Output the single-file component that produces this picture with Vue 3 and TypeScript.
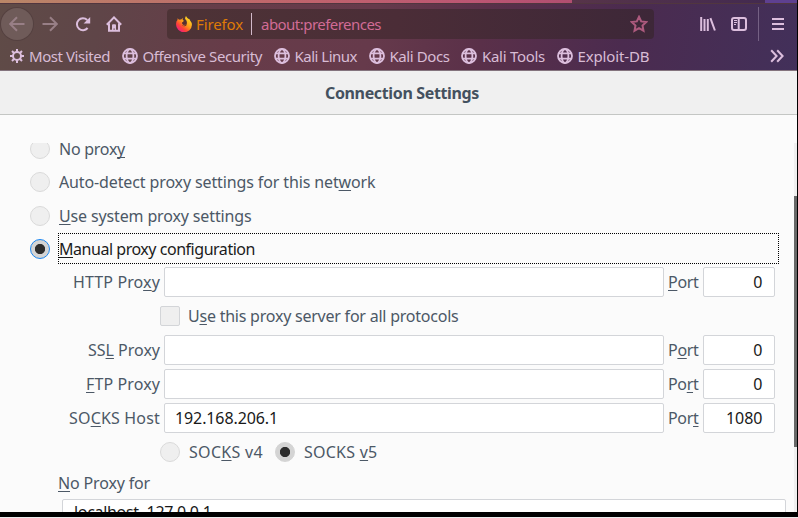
<script setup lang="ts">
import type { Directive } from 'vue'

interface Bookmark { name: string; width: number }
interface Label { before: string; key: string; after: string; width: number }
interface ProxyRow { label: Label; host: string; port: Label; portValue: string }

const bookmarks: Bookmark[] = [
  { name: 'Offensive Security', width: 119.5 },
  { name: 'Kali Linux', width: 62.5 },
  { name: 'Kali Docs', width: 60 },
  { name: 'Kali Tools', width: 63 },
  { name: 'Exploit-DB', width: 72 },
]

const modes: Label[] = [
  { before: 'No prox', key: 'y', after: '', width: 66 },
  { before: 'Auto-detect proxy settings for this net', key: 'w', after: 'ork', width: 316.5 },
  { before: '', key: 'U', after: 'se system proxy settings', width: 192.5 },
  { before: '', key: 'M', after: 'anual proxy configuration', width: 196 },
]

const httpRow: ProxyRow = {
  label: { before: 'HTTP Pro', key: 'x', after: 'y', width: 87 },
  host: '', port: { before: '', key: 'P', after: 'ort', width: 30.5 }, portValue: '0',
}
const otherRows: ProxyRow[] = [
  { label: { before: 'SS', key: 'L', after: ' Proxy', width: 72 }, host: '', port: { before: 'P', key: 'o', after: 'rt', width: 30.5 }, portValue: '0' },
  { label: { before: '', key: 'F', after: 'TP Proxy', width: 74 }, host: '', port: { before: 'Po', key: 'r', after: 't', width: 30.5 }, portValue: '0' },
  { label: { before: 'SO', key: 'C', after: 'KS Host', width: 91 }, host: '192.168.206.1', port: { before: 'Por', key: 't', after: '', width: 30.5 }, portValue: '1080' },
]

// Spreads the tracking of a label so that it fills the given width.
const vFit: Directive<HTMLElement, number> = {
  mounted(el, { value }) {
    const count = (el.textContent ?? '').length
    const natural = el.getBoundingClientRect().width
    if (count) el.style.letterSpacing = `${((value - natural) / count).toFixed(3)}px`
  },
}
</script>

<template>
  <div class="window">
    <div class="tabstrip"><i class="tab-active"></i><i class="tab-rest"></i></div>
    <header class="chrome">
      <div class="navbar">
        <span class="back">
          <svg width="16" height="16" viewBox="0 0 16 16"><path d="M15.5 8H1.5M8 1.2L1.2 8L8 14.8" /></svg>
        </span>
        <svg class="forward" width="16" height="16" viewBox="0 0 16 16"><path d="M.5 8H14.5M8 1.2L14.8 8L8 14.8" /></svg>
        <svg class="reload" width="16" height="16" viewBox="0 0 16 16"><path d="M12.6 12A6 6 0 1 1 12.2 4" /><path class="solid" d="M15.2 1V7.6H8.6Z" /></svg>
        <svg class="home" width="16" height="16" viewBox="0 0 16 16"><path d="M.8 8.8L8 1.4L15.2 8.8M3 7.4V14.8H13V7.4" /><path class="solid" d="M6 15V9.2Q6 8.2 7 8.2H9Q10 8.2 10 9.2V15H8.7V12.5H7.5V15Z" /></svg>
        <div class="urlbar">
          <svg class="logo" width="16" height="16" viewBox="0 0 16 16">
            <defs>
              <linearGradient id="fx" x1="0.85" y1="0.1" x2="0.2" y2="0.9"><stop offset="0" stop-color="#ffe226" /><stop offset=".45" stop-color="#ff9a1a" /><stop offset=".75" stop-color="#ff4238" /><stop offset="1" stop-color="#f0207a" /></linearGradient>
            </defs>
            <path fill="url(#fx)" d="M1.6 2.2L3 3.7Q4.1 3.3 5.2 3.6L6.8 2L6.7 4.1L8.3 5L6.5 6.3Q5.7 8.4 7.8 9Q10.4 9 10.8 6.5Q11 4.2 9.1 2.9Q9 1.2 10 0Q10.4 1.4 12.2 2.7L13.3 3L14.1 4.4Q16 6.5 15.9 9A7.9 7.5 0 0 1 .1 8.5Q-.1 5.4 1.5 4Z" />
            <path fill="#5a2f30" d="M8.2 5L6.6 6.2Q5.8 7 6.6 7.9Q8.2 8.7 9.6 7.6L9.3 8.9Q7.8 10.2 5.8 9.3Q6.6 10.5 8.6 10.3Q10.9 9.7 10.8 7.4Q10.5 5 8.2 5Z" />
          </svg>
          <span class="brand"><span v-fit="47">Firefox</span></span>
          <i class="rule"></i>
          <span class="url"><span v-fit="120">about:preferences</span></span>
          <svg class="star" width="18" height="18" viewBox="0 0 18 18"><path d="M9 1.8L11.2 6.4L16.2 7L12.5 10.5L13.5 15.7L9 13.1L4.5 15.7L5.5 10.5L1.8 7L6.8 6.4Z" /></svg>
        </div>
        <svg class="library" width="16" height="16" viewBox="0 0 16 16"><path d="M1.2 1V15M4.5 3V15M7.8 3V15M10.4 2.2L14.9 14.5" /></svg>
        <svg class="sidebar" width="16" height="16" viewBox="0 0 16 16"><rect x="1" y="2" width="14" height="12" rx="2" /><path d="M7.7 2V14" /><path class="thin" d="M3 4.5H6M3 6.5H6M3 8.5H5" /></svg>
        <i class="divider"></i>
        <svg class="menu" width="14" height="14" viewBox="0 0 14 14"><path d="M1 2H13M1 7H13M1 12H13" /></svg>
      </div>
      <nav class="bookmarks">
        <svg class="gear" width="14" height="14" viewBox="0 0 14 14"><circle cx="7" cy="7" r="4" /><path d="M7 0V3M7 11V14M0 7H3M11 7H14M2 2L4.2 4.2M9.8 9.8L12 12M12 2L9.8 4.2M4.2 9.8L2 12" /></svg>
        <span class="most"><span v-fit="81">Most Visited</span></span>
        <a v-for="b in bookmarks" :key="b.name" class="bookmark">
          <svg width="16" height="16" viewBox="0 0 16 16"><circle cx="8" cy="8" r="7" /><ellipse cx="8" cy="8" rx="3.4" ry="7" /><path d="M1.8 5.3H14.2M1.8 10.7H14.2" /></svg>
          <span class="bookmark-name"><span v-fit="b.width">{{ b.name }}</span></span>
        </a>
        <svg class="more" width="14" height="14" viewBox="0 0 14 14"><path d="M1.2 1.2L6.6 7L1.2 12.8M7.2 1.2L12.6 7L7.2 12.8" /></svg>
      </nav>
    </header>

    <div class="title"><h1><span v-fit="154">Connection Settings</span></h1></div>

    <main class="dialog">
      <div class="scroller">
        <div class="form">
          <label v-for="(m, i) in modes" :key="i" class="mode" :class="{ selected: i === 3 }">
            <i class="radio" :class="{ on: i === 3, focus: i === 3 }"></i>
            <span class="mode-text"><span v-fit="m.width">{{ m.before }}<u>{{ m.key }}</u>{{ m.after }}</span></span>
          </label>

          <div class="proxy">
            <span class="name"><span v-fit="httpRow.label.width">{{ httpRow.label.before }}<u>{{ httpRow.label.key }}</u>{{ httpRow.label.after }}</span></span>
            <div class="field host"></div>
            <span class="port-label"><span v-fit="httpRow.port.width">{{ httpRow.port.before }}<u>{{ httpRow.port.key }}</u>{{ httpRow.port.after }}</span></span>
            <div class="field port">{{ httpRow.portValue }}</div>
          </div>
          <label class="sub">
            <i class="check"></i>
            <span class="sub-text"><span v-fit="270.5">U<u>s</u>e this proxy server for all protocols</span></span>
          </label>
          <div v-for="r in otherRows" :key="r.label.key" class="proxy">
            <span class="name"><span v-fit="r.label.width">{{ r.label.before }}<u>{{ r.label.key }}</u>{{ r.label.after }}</span></span>
            <div class="field host"><span v-fit="103">{{ r.host }}</span></div>
            <span class="port-label"><span v-fit="r.port.width">{{ r.port.before }}<u>{{ r.port.key }}</u>{{ r.port.after }}</span></span>
            <div class="field port">{{ r.portValue }}</div>
          </div>
          <div class="sub">
            <label class="version"><i class="radio"></i><span class="sub-text"><span v-fit="74">SOC<u>K</u>S v4</span></span></label>
            <label class="version"><i class="radio on"></i><span class="sub-text"><span v-fit="73.5">SOCKS <u>v</u>5</span></span></label>
          </div>
          <div class="exceptions"><span v-fit="92"><u>N</u>o Proxy for</span></div>
          <div class="textarea"><span v-fit="137.5">localhost, 127.0.0.1</span></div>
        </div>
      </div>
      <div class="scrollbar"><i class="thumb"></i></div>
    </main>
  </div>
</template>

<style>
body { margin: 0; background: #ececec; }
</style>

<style scoped>
* { box-sizing: border-box; }
.window {
  width: 798px; height: 517px; display: flex; flex-direction: column; overflow: hidden;
  border-right: 1px solid #000; border-bottom: 5px solid #000; background: #fbfbfb;
  font-family: "Noto Sans", "Open Sans", sans-serif; font-size: 16px; color: #4c5866; white-space: nowrap;
}
svg { display: block; flex: none; fill: none; stroke: #dcbedd; stroke-width: 2; }
.solid { fill: #dcbedd; stroke: none; }
i { display: block; flex: none; }
.tabstrip { height: 3px; flex: none; display: flex; background: linear-gradient(90deg, #b98667, #c0666b 270px, #bc5673 470px, #b04e70 572px, #5e4090 572px); }
.tab-active { width: 572px; }
.tab-rest { width: 193px; background: linear-gradient(90deg, #573449, #432a50); }
.chrome {
  height: 68px; flex: none; border-bottom: 1px solid #84747e; border-top: 1px solid #51363f;
  background: linear-gradient(100deg, #5f4b47 0, #5f4548 100px, #673c49 230px, #663a4b 370px, #5a3049 480px, #4b2b4f 620px, #42305a 800px);
}
.navbar { height: 40px; display: flex; align-items: center; }
.back { width: 32px; height: 32px; margin-left: 1px; border-radius: 50%; display: flex; align-items: center; justify-content: center; background: #6f5b59; box-shadow: 0 0 0 1px #554140; flex: none; }
.back svg, .forward { stroke: #987f86; }
.forward { margin-left: 9px; }
.reload { margin-left: 17px; }
.home { margin-left: 15px; }
.urlbar { width: 487px; height: 30px; margin-left: 45px; padding-left: 9px; border-radius: 4px; display: flex; align-items: center; flex: none; font-size: 15px; background: linear-gradient(90deg, #4d3336, #4b2d37 230px, #3d2738); }
.logo { stroke: none; }
.brand { flex: none; width: 59px; padding-left: 4px; color: #df7b06; }
.rule { width: 1px; height: 22px; margin-right: 9px; background: #d2b9ca; }
.url { color: #d16b95; }
.star { margin-left: auto; margin-right: 6px; stroke: #ad5a7e; }
.library { margin-left: 46px; }
.sidebar { margin-left: 15px; }
.sidebar .thin { stroke-width: 1; }
.divider { width: 1px; height: 34px; margin-left: 11px; background: #756184; }
.menu { margin-left: 12px; }
.bookmarks { height: 24px; display: flex; align-items: center; padding-left: 10px; font-size: 15px; color: #d8bcd5; line-height: 20px; }
.bookmarks > * { position: relative; top: -0.5px; }
.most { flex: none; width: 93px; margin-left: 5px; }
.bookmark { display: flex; align-items: center; flex: none; }
.bookmark svg { stroke-width: 1.8; }
.bookmark-name { margin-left: 4.5px; margin-right: 12px; }
.more { margin-left: auto; margin-right: 13px; }
.title { height: 44px; flex: none; display: flex; align-items: center; justify-content: center; background: #f0f0f0; border-bottom: 1px solid #c4c6c4; }
h1 { margin: 0 0 0 7px; width: 154px; font-size: 16px; font-weight: 700; line-height: 22px; color: #44515f; }
.dialog { flex: 1; min-height: 0; display: flex; background: #fbfbfb; }
.scroller { flex: 1; min-width: 0; margin-top: 28px; overflow: hidden; }
.form { margin-top: -10px; padding-left: 30px; line-height: 22px; }
u { text-decoration: underline; text-decoration-thickness: 1px; text-underline-offset: 2px; text-decoration-skip-ink: none; }
.mode { display: flex; align-items: center; height: 34px; }
.mode:first-child { height: 32px; }
.mode.selected { height: 31px; margin-bottom: 3px; color: #1b1b1b; }
.mode-text { margin-left: 8px; width: 721px; padding-left: 1px; }
.selected .mode-text { height: 31px; line-height: 30px; border: 1px dotted #000; padding-left: 0; }
.radio { width: 20px; height: 20px; border: 1px solid #dadada; border-radius: 50%; background: #efefef; }
.radio.on { border-color: #d4d4d4; background: radial-gradient(circle, #2d2d2d 4.7px, #d4d4d4 5.5px); }
.radio.focus { border-color: #1a86f0; }
.proxy { display: flex; align-items: center; height: 30px; margin-bottom: 4px; }
.mode.selected + .proxy { margin-bottom: 0; }
.name { width: 130px; text-align: right; margin-right: 4px; }
.field { height: 30px; border: 1px solid #d3d5d9; border-radius: 2px; background: #fff; color: #191919; line-height: 28px; }
.host { width: 500px; padding-left: 10px; }
.port-label { width: 39px; padding-left: 4px; }
.port { width: 72px; padding-right: 11.5px; text-align: right; }
.sub { height: 38px; padding-left: 130px; display: flex; align-items: center; }
.proxy + .sub:not(label) { margin-top: -4px; }
.check { width: 20px; height: 20px; border: 1px solid #d3d5d8; border-radius: 2px; background: #efefef; }
.sub-text { margin-left: 9px; }
label.sub .sub-text { margin-left: 8px; }
.version { display: flex; align-items: center; width: 115px; }
.exceptions { height: 28px; line-height: 24px; padding-left: 28px; }
.textarea { height: 60px; width: 724px; margin-left: 32px; padding-left: 11px; border: 1px solid #d3d5d9; border-radius: 2px; background: #fff; color: #191919; line-height: 24px; }
.scrollbar { width: 3px; flex: none; margin-top: 28px; padding-top: 53px; background: #efefef; }
.thumb { height: 251px; background: #686868; }
</style>
